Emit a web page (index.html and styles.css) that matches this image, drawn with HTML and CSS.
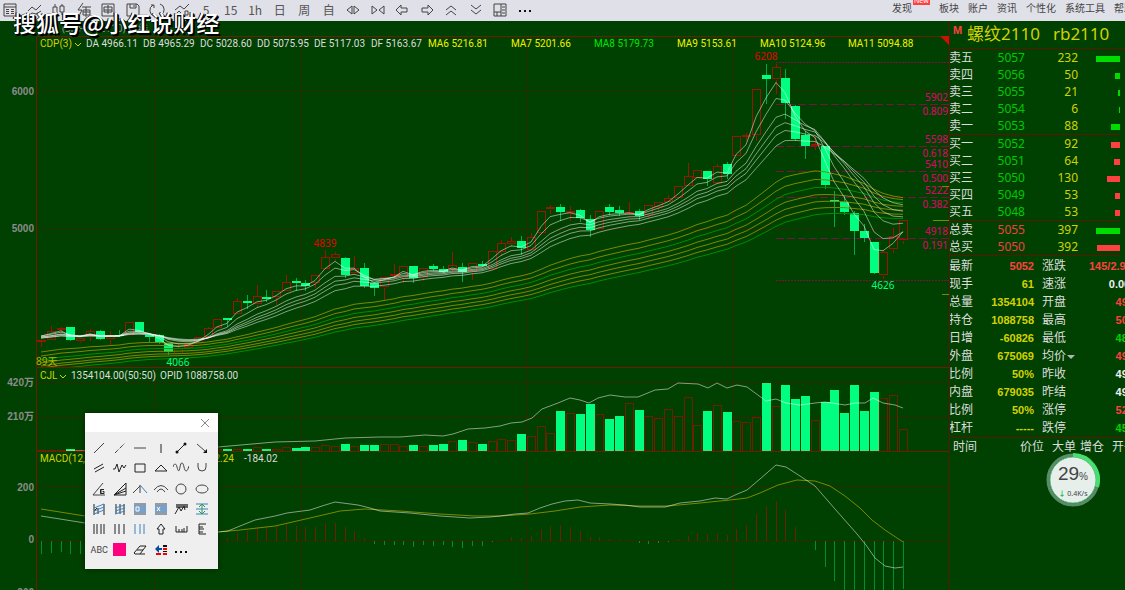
FILE: index.html
```html
<!DOCTYPE html>
<html lang="zh-CN">
<head>
    <meta charset="UTF-8">
    <meta name="viewport" content="width=device-width, initial-scale=1.0">
    <title>螺纹2110 rb2110</title>
    <link rel="stylesheet" href="styles.css">
</head>
<body>
    <header class="toolbar">
        <div class="tools">
            <button aria-label="报价"><svg viewBox="0 0 16 16"><path d="M2 2h12v12H2zM2 5h12M4 7.500h3M9 7.500h3M4 9.500h3M9 9.500h3M4 11.500h3M9 11.500h3"/></svg></button>
            <button aria-label="分时"><svg viewBox="0 0 16 16"><path d="M1 9l4-4 4 3 5-5M1 14l4-3 4 1 5-3"/></svg></button>
            <button aria-label="K线"><svg viewBox="0 0 16 16"><path d="M2 5h4v7H2zM4 2v3M4 12v3M9 4h4v6H9zM11 2v2M11 10v3"/></svg></button>
            <button aria-label="闪电下单"><svg viewBox="0 0 16 16"><path d="M7 1L2 8h4l-3 6M6 5h9M7 8h7v5H7zM10 5v10M7 10h7"/></svg></button>
            <button aria-label="画线下单"><svg viewBox="0 0 16 16"><path d="M2 2h12v12H2zM4 5h8v5H4zM8 3v9M4 8h8"/></svg></button>
            <button aria-label="保存"><svg viewBox="0 0 16 16"><path d="M2 2h10l2 2v10H2zM5 2v4h6V2M9 3v2"/></svg></button>
            <button aria-label="刷新"><svg viewBox="0 0 16 16"><path d="M5 14A6 6 0 0 1 4 3M2 3h3v3M11 2a6 6 0 0 1 1 11M14 13h-3v-3"/></svg></button>
            <button aria-label="指标"><svg viewBox="0 0 16 16"><path d="M1 8l5-4 4 3 5-5M1 13l4-4 4 4M11 9h3v4h-3z"/></svg></button>
            <button>5</button>
            <button>15</button>
            <button>1h</button>
            <button>日</button>
            <button>周</button>
            <button>自</button>
            <button aria-label="放大"><svg viewBox="0 0 16 16"><path d="M7 4v8L2 8zM9 4v8l5-4z"/></svg></button>
            <button aria-label="缩小"><svg viewBox="0 0 16 16"><path d="M2 4v8l5-4zM14 4v8L9 8z"/></svg></button>
            <button aria-label="左移"><svg viewBox="0 0 16 16"><path d="M2 8l5-5v3h6v4H7v3z"/></svg></button>
            <button aria-label="右移"><svg viewBox="0 0 16 16"><path d="M14 8L9 3v3H3v4h6v3z"/></svg></button>
            <button aria-label="上翻"><svg viewBox="0 0 16 16"><path d="M3 8l5-4 5 4M3 13l5-4 5 4"/></svg></button>
            <button aria-label="下翻"><svg viewBox="0 0 16 16"><path d="M3 3l5 4 5-4M3 8l5 4 5-4"/></svg></button>
            <button aria-label="布局"><svg viewBox="0 0 16 16"><path d="M2 2h12v12H2zM9 2v12M2 10h7M10 5h3M10 8h3M10 11h3M5 10v4"/></svg></button>
            <button aria-label="更多"><svg viewBox="0 0 16 16"><path class="solid" d="M2 8h2v2H2zM7 8h2v2H7zM12 8h2v2h-2z"/></svg></button>
        </div>
        <nav class="menu">
            <a href="#" class="find">发现<span class="new">New</span></a>
            <a href="#">板块</a>
            <a href="#">账户</a>
            <a href="#">资讯</a>
            <a href="#">个性化</a>
            <a href="#">系统工具</a>
            <a href="#">帮助</a>
        </nav>
    </header>
    <div class="watermark">搜狐号@小红说财经</div>

    <main class="main">
        <section class="charts" id="charts">
            <div class="title">(SHFE Z 2110) 日线</div>
            <div class="panel price">
                <svg id="price"></svg>
                <div class="legend">
                    <span class="name">CDP(3)<svg class="caret" viewBox="0 0 8 8"><path d="M1 3l3 3 3-3"/></svg></span>
                    <span class="d">DA 4966.11</span>
                    <span class="d">DB 4965.29</span>
                    <span class="d">DC 5028.60</span>
                    <span class="d">DD 5075.95</span>
                    <span class="d">DE 5117.03</span>
                    <span class="d">DF 5163.67</span>
                    <span class="ma">MA6 5216.81</span>
                    <span class="ma">MA7 5201.66</span>
                    <span class="ma lime">MA8 5179.73</span>
                    <span class="ma">MA9 5153.61</span>
                    <span class="ma wide">MA10 5124.96</span>
                    <span class="ma">MA11 5094.88</span>
                </div>
            </div>
            <div class="panel volume">
                <svg id="volume"></svg>
                <div class="legend">
                    <span class="cjl">CJL<svg class="caret" viewBox="0 0 8 8"><path d="M1 3l3 3 3-3"/></svg></span>
                    <span class="vol">1354104.00(50:50)</span>
                    <span>OPID 1088758.00</span>
                </div>
            </div>
            <div class="panel macd">
                <svg id="macd"></svg>
                <div class="legend">
                    <span class="macd-name"><span>MACD(12,26,9)</span><span>DEA -12.24</span></span>
                    <span>-184.02</span>
                </div>
            </div>

            <div class="palette">
                <div class="palette-head"><button aria-label="关闭"><svg viewBox="0 0 16 16"><path d="M4 4l8 8M12 4l-8 8"/></svg></button></div>
                <div class="palette-grid">
                    <button aria-label="线段"><svg viewBox="0 0 16 16"><path d="M3 13L13 3"/></svg></button>
                    <button aria-label="虚线"><svg viewBox="0 0 16 16"><path d="M3 13L13 3" stroke-dasharray="4 1 1 1"/></svg></button>
                    <button aria-label="水平线"><svg viewBox="0 0 16 16"><path d="M2 8h12"/></svg></button>
                    <button aria-label="垂直线"><svg viewBox="0 0 16 16"><path class="dark" d="M8 4v9"/></svg></button>
                    <button aria-label="双点线"><svg viewBox="0 0 16 16"><path class="dark" d="M4 12l8-8"/><circle class="solid" cx="4" cy="12" r="1.500"/><circle class="solid" cx="12" cy="4" r="1.500"/></svg></button>
                    <button aria-label="箭头"><svg viewBox="0 0 16 16"><path d="M3 4l8 7"/><path class="solid" d="M13 13H9l4-4z"/></svg></button>

                    <button aria-label="平行线"><svg viewBox="0 0 16 16"><path class="dark" d="M3 9l9-5M4 12l9-5"/></svg></button>
                    <button aria-label="折线"><svg viewBox="0 0 16 16"><path class="dark" d="M1 9h2l2-5 2 8 3-7 2 3 2-3"/></svg></button>
                    <button aria-label="矩形"><svg viewBox="0 0 16 16"><path class="dark" d="M3 4h10v8H3z"/></svg></button>
                    <button aria-label="三角形"><svg viewBox="0 0 16 16"><path class="dark" d="M8 5l6 6H2z"/></svg></button>
                    <button aria-label="波浪线"><svg viewBox="0 0 16 16"><path d="M0 7c1-4 3-4 4 0s2 6 3 0 3-5 4 0 3 6 5-1"/></svg></button>
                    <button aria-label="弧线"><svg viewBox="0 0 16 16"><path d="M4 3v4a4 4 0 0 0 8 0V3"/></svg></button>

                    <button aria-label="江恩角度"><svg viewBox="0 0 16 16"><path d="M12 2L2 14h12"/><path class="dark" d="M13 8.500h-3.500v4H13V10.500h-1.500M10 8.500v4"/></svg></button>
                    <button aria-label="速阻线"><svg viewBox="0 0 16 16"><path class="dark" d="M14 2L2 14h12zM2 14l12-4M2 14l12-7"/></svg></button>
                    <button aria-label="分叉线"><svg viewBox="0 0 16 16"><path d="M1 12l7-7M8 12V4"/><path class="blue" d="M8 4l7 8"/></svg></button>
                    <button aria-label="圆弧"><svg viewBox="0 0 16 16"><path d="M1 9q7-9 14 0M4 11q4-6 8 0"/></svg></button>
                    <button aria-label="圆"><svg viewBox="0 0 16 16"><circle cx="8" cy="8" r="5"/></svg></button>
                    <button aria-label="椭圆"><svg viewBox="0 0 16 16"><ellipse cx="8" cy="8" rx="6" ry="4"/></svg></button>

                    <button aria-label="通道一"><svg viewBox="0 0 16 16"><path class="dark" d="M3 3v11M13 3v11M7 7v6M3 10l3-3"/><path class="blue" d="M3 7l10-4M3 10l10-4M3 13l10-4"/></svg></button>
                    <button aria-label="通道二"><svg viewBox="0 0 16 16"><path class="dark" d="M4 3v10M8 3v10M12 3v11"/><path class="blue" d="M3 7l10-3M3 10l10-3M3 13l10-3"/></svg></button>
                    <button aria-label="区间一"><svg viewBox="0 0 16 16"><path class="fill" d="M2 4h12v8H2z"/><path d="M2 3h12M2 13h12"/><path class="light" d="M4 6h3v4H4z"/></svg></button>
                    <button aria-label="区间二"><svg viewBox="0 0 16 16"><path class="fill" d="M2 4h12v8H2z"/><path d="M2 3h12M2 13h12"/><path class="light" d="M4 6l3 4M7 6l-3 4"/></svg></button>
                    <button aria-label="形态"><svg viewBox="0 0 16 16"><path class="gray" d="M3 3h12v4H3z"/><path class="dark" d="M2 13l4-7 2 4 3-5 1 4"/></svg></button>
                    <button aria-label="测距"><svg viewBox="0 0 16 16"><path class="blue" d="M2 3h12M2 8h12M2 13h12"/><path class="green" d="M8 3v10M5 6l3-3 3 3M5 10l3 3 3-3"/></svg></button>

                    <button aria-label="四线"><svg viewBox="0 0 16 16"><path class="dark" d="M3 3v10M6 3v10M10 3v10M13 3v10"/></svg></button>
                    <button aria-label="三线"><svg viewBox="0 0 16 16"><path class="dark" d="M3 3v10M7 3v10M12 3v10"/></svg></button>
                    <button aria-label="蓝线"><svg viewBox="0 0 16 16"><path class="blue" d="M3 3v10M8 3v10M12 3v10"/></svg></button>
                    <button aria-label="上箭头"><svg viewBox="0 0 16 16"><path class="dark" d="M8 3l4 5h-2v5H6V8H4z"/></svg></button>
                    <button aria-label="横标尺"><svg viewBox="0 0 16 16"><path class="dark" d="M3 5v6h11V5M6 8v3M9 8v3M11 7v4"/></svg></button>
                    <button aria-label="竖标尺"><svg viewBox="0 0 16 16"><path class="dark" d="M12 3H5v10h7M5 6h4M5 8h5M5 11h4"/></svg></button>

                    <button class="abc">ABC</button>
                    <button aria-label="颜色"><svg viewBox="0 0 16 16"><path class="pink" d="M1 1h13v13H1z"/></svg></button>
                    <button aria-label="橡皮"><svg viewBox="0 0 16 16"><path class="dark" d="M2 11l6-7h6l-6 8H3zM5 8h6M8 12h5"/></svg></button>
                    <button aria-label="设置"><svg viewBox="0 0 16 16"><path class="navy" d="M2 7l4-4v3h3v2H6v3z"/><path class="red" d="M3 11h5v2H3zM10 6h4v2h-4zM10 11h4v2h-4z"/><path class="solid" d="M10 3h4v2h-4zM10 9h4v1h-4z"/></svg></button>
                    <button aria-label="更多画线"><svg viewBox="0 0 16 16"><path class="solid" d="M2 9h2v2H2zM7 9h2v2H7zM12 9h2v2h-2z"/></svg></button>
                </div>
            </div>
        </section>

        <aside class="side">
            <div class="side-inner">
                <h1><span class="m">M</span><span>螺纹2110</span><span>rb2110</span></h1>
                <table class="book sell">
                    <tr><th>卖五</th><td>5057</td><td>232</td><td><i style="width:24px"></i></td></tr>
                    <tr><th>卖四</th><td>5056</td><td>50</td><td><i style="width:5px"></i></td></tr>
                    <tr><th>卖三</th><td>5055</td><td>21</td><td><i style="width:2px"></i></td></tr>
                    <tr><th>卖二</th><td>5054</td><td>6</td><td><i style="width:1px"></i></td></tr>
                    <tr><th>卖一</th><td>5053</td><td>88</td><td><i style="width:9px"></i></td></tr>
                </table>
                <table class="book buy">
                    <tr><th>买一</th><td>5052</td><td>92</td><td><i style="width:9px"></i></td></tr>
                    <tr><th>买二</th><td>5051</td><td>64</td><td><i style="width:6px"></i></td></tr>
                    <tr><th>买三</th><td>5050</td><td>130</td><td><i style="width:13px"></i></td></tr>
                    <tr><th>买四</th><td>5049</td><td>53</td><td><i style="width:5px"></i></td></tr>
                    <tr><th>买五</th><td>5048</td><td>53</td><td><i style="width:5px"></i></td></tr>
                </table>
                <table class="book total">
                    <tr class="up"><th>总卖</th><td>5055</td><td>397</td><td><i style="width:24px"></i></td></tr>
                    <tr><th>总买</th><td>5050</td><td>392</td><td><i style="width:23px"></i></td></tr>
                </table>
                <table class="stats">
                    <tr><th>最新</th><td class="r">5052</td><th>涨跌</th><td class="r">145/2.95%</td></tr>
                    <tr><th>现手</th><td>61</td><th>速涨</th><td class="w">0.00%</td></tr>
                    <tr><th>总量</th><td>1354104</td><th>开盘</th><td class="r">4926</td></tr>
                    <tr><th>持仓</th><td>1088758</td><th>最高</th><td class="r">5060</td></tr>
                    <tr><th>日增</th><td>-60826</td><th>最低</th><td class="g">4888</td></tr>
                    <tr><th>外盘</th><td>675069</td><th>均价<b class="drop"></b></th><td class="r">4980</td></tr>
                    <tr><th>比例</th><td>50%</td><th>昨收</th><td class="w">4928</td></tr>
                    <tr><th>内盘</th><td>679035</td><th>昨结</th><td class="w">4907</td></tr>
                    <tr><th>比例</th><td>50%</td><th>涨停</th><td class="r">5299</td></tr>
                    <tr><th>杠杆</th><td>-----</td><th>跌停</th><td class="g">4514</td></tr>
                </table>
                <div class="ticks"><span>时间</span><span>价位</span><span>大单</span><span>增仓</span><span>开平</span></div>
            </div>
        </aside>

        <div class="gauge">
            <svg viewBox="0 0 54 54">
                <circle class="ring" cx="27" cy="27" r="25"/>
                <path class="arc" d="M27 2A25 25 0 0 1 51 34"/>
                <circle class="face" cx="27" cy="27" r="23"/>
            </svg>
            <div class="pct">29<small>%</small></div>
            <div class="net"><em>↓</em> 0.4K/s</div>
        </div>
    </main>
    <script src="chart.js"></script>
</body>
</html>
```
FILE: styles.css
```css
body {
    margin: 0;
    min-height: 590px;
    overflow-x: hidden;
    background-color: #004000;
    color: #dcdcdc;
    font-family: "Noto Sans", "Noto Sans CJK SC", sans-serif;
    font-size: 10px;
}
button {
    padding: 0;
    border: 0;
    background: none;
    font: inherit;
    color: inherit;
}
/* toolbar */
.toolbar {
    display: flex;
    justify-content: space-between;
    height: 21px;
    background-color: #e0e0e8;
    color: #555;
    overflow: hidden;
}
.tools {
    display: flex;
    flex: none;
    justify-content: space-between;
    width: 531px;
    padding-left: 2px;
}
.tools button {
    width: 16px;
    height: 19px;
    font-family: "Noto Sans CJK SC", sans-serif;
    font-size: 12px;
    line-height: 19px;
    white-space: nowrap;
    display: flex;
    justify-content: center;
    align-items: center;
}
.tools svg {
    width: 16px;
    height: 16px;
}
svg path, svg circle, svg ellipse {
    fill: none;
    stroke: #444;
}
svg .solid {
    fill: #111;
    stroke: none;
}
.menu {
    display: flex;
    flex: none;
    gap: 9px;
    margin-right: -9px;
    line-height: 17px;
    white-space: nowrap;
}
.menu a {
    color: #444;
    text-decoration: none;
}
.find {
    position: relative;
    margin-right: 18px;
}
.new {
    position: absolute;
    left: 21px;
    top: -4px;
    padding: 0 1px;
    background-color: #ff4040;
    color: #fff;
    font-size: 7px;
    line-height: 9px;
}
.watermark {
    position: absolute;
    left: 13px;
    top: 6px;
    z-index: 5;
    color: #fff;
    font-family: "Noto Sans CJK SC", sans-serif;
    font-size: 23px;
    font-weight: 500;
    line-height: 32px;
    text-shadow: 1px 1px 0 #000, 2px 2px 0 #000, -1px 0 0 #000;
}
/* layout */
.main {
    position: relative;
    display: grid;
    grid-template-columns: minmax(0, 1fr) 176px;
}
.charts {
    position: relative;
}
.title {
    height: 15px;
    padding-left: 62px;
    color: #8a9a8a;
    line-height: 15px;
}
.panel {
    position: relative;
    overflow: hidden;
}
.price {
    height: 331px;
}
.volume {
    height: 84px;
}
.macd {
    height: 139px;
}
.panel > svg {
    display: block;
    width: 100%;
    height: 100%;
}
.legend {
    position: absolute;
    left: 40px;
    top: 0;
    display: flex;
    font-family: Roboto, sans-serif;
    line-height: 15px;
    white-space: nowrap;
}
.volume .legend {
    top: 1px;
}
.name, .cjl, .macd-name, .ma {
    color: #d2d200;
}
.name {
    width: 46px;
}
.d {
    width: 57px;
}
.ma {
    width: 83px;
    color: #f0f000;
}
.wide {
    width: 88px;
}
.lime {
    color: #00e600;
}
.cjl {
    width: 31px;
}
.vol {
    width: 89px;
}
.macd-name {
    display: flex;
    justify-content: space-between;
    width: 194px;
    margin-right: 10px;
}
.caret {
    width: 8px;
    height: 8px;
    margin-left: 2px;
    vertical-align: middle;
}
.caret path {
    stroke: #d2d200;
}
/* chart drawing */
.panel svg .grid {
    stroke: #282c00;
    stroke-width: 1;
}
.panel svg .axis {
    stroke: #701c00;
    stroke-width: 1;
}
.panel svg .up {
    fill: none;
    stroke: #961800;
}
.panel svg .down {
    fill: #00ff80;
    stroke: none;
}
.panel svg .wick-up {
    stroke: #961800;
}
.panel svg .wick-down {
    stroke: #00a850;
}
.panel svg .bar-up {
    stroke: #6c2000;
}
.panel svg .bar-down {
    stroke: #008c38;
}
.panel svg .white {
    stroke: #fff;
    stroke-opacity: 0.500;
}
.panel svg .yellow {
    stroke: #7c8800;
}
.panel svg .green {
    stroke: #008c00;
}
.panel svg .fib {
    stroke: #7c1040;
}
.panel svg .corner {
    fill: #c81400;
    stroke: none;
}
.scale {
    fill: #8c8c8c;
    font-family: "Liberation Sans", "Noto Sans CJK SC", sans-serif;
    font-weight: bold;
}
.pinktext {
    fill: #e00070;
}
.redtext {
    fill: #e60000;
}
.greentext {
    fill: #00ff80;
}
.yellowtext {
    fill: #b4b400;
}
/* drawing palette */
.palette {
    position: absolute;
    left: 85px;
    top: 392px;
    width: 133px;
    background-color: #efefef;
    color: #444;
    box-shadow: 0 0 4px #002000;
}
.palette-head {
    height: 19px;
    background-color: #fff;
    text-align: right;
}
.palette-head button {
    height: 19px;
    margin-right: 5px;
}
.palette-head path {
    stroke: #888;
}
.palette svg {
    display: block;
    width: 16px;
    height: 16px;
}
.palette-grid {
    display: grid;
    grid-template-columns: repeat(6, 1fr);
    grid-template-rows: repeat(6, 1fr);
    height: 122px;
    padding: 6px 6px 9px 4px;
}
.palette-grid button {
    display: flex;
    justify-content: center;
    align-items: center;
}
.palette .abc {
    font-family: Roboto, sans-serif;
    font-size: 9px;
}
.palette .dark {
    stroke: #222;
}
.palette .blue {
    stroke: #3c82be;
}
.palette .green {
    stroke: #2c9a4c;
}
.palette .fill {
    fill: #78a0c8;
    stroke: none;
}
.palette .gray {
    fill: #666;
    stroke: none;
}
.palette .light {
    stroke: #fff;
}
.palette .pink {
    fill: #ff0080;
    stroke: none;
}
.palette .navy {
    fill: #0050a0;
    stroke: none;
}
.palette .red {
    fill: #f00000;
    stroke: none;
}
/* quote side */
.side {
    overflow: hidden;
    box-sizing: border-box;
    border-left: 1px solid #5a1800;
}
.side-inner {
    width: 193px;
    margin-left: -1px;
}
h1 {
    display: flex;
    height: 27px;
    margin: 0;
    border-bottom: 1px solid #5a1800;
    color: #d2d200;
    font-size: 17px;
    font-weight: normal;
    line-height: 26px;
}
h1 span {
    margin-right: 13px;
}
h1 .m {
    width: 14px;
    margin: 0 0 0 4px;
    color: #ff4040;
    font-family: "Liberation Sans", sans-serif;
    font-size: 11px;
    font-weight: bold;
    line-height: 18px;
}
table {
    border-collapse: collapse;
    table-layout: fixed;
    font-size: 12px;
}
th {
    padding: 0;
    font-weight: normal;
    text-align: left;
    white-space: nowrap;
}
td {
    padding: 0;
    text-align: right;
    white-space: nowrap;
}
.book {
    width: 171px;
}
.book.buy {
    border-top: 1px solid #5a1800;
    border-bottom: 1px solid #5a1800;
}
.book.total {
    border-bottom: 1px solid #5a1800;
}
.book tr {
    height: 17px;
    line-height: 17px;
}
.book th {
    width: 36px;
}
.book td:nth-child(2) {
    width: 40px;
    color: #00c800;
}
.book td:nth-child(3) {
    width: 53px;
    color: #d2d200;
}
.book i {
    display: inline-block;
    height: 6px;
    background-color: #ff4040;
}
.sell i, .up i {
    background-color: #00dc00;
}
.book.total td:nth-child(2) {
    color: #f04040;
}
.stats {
    width: 191px;
    margin-top: 1px;
}
.stats tr {
    height: 18px;
    line-height: 18px;
}
.stats th:first-child {
    width: 36px;
}
.stats th:nth-child(3) {
    width: 47px;
    padding-left: 8px;
}
.stats td {
    color: #d2d200;
    font-family: "Liberation Sans", sans-serif;
    font-size: 11px;
    font-weight: bold;
}
.stats td:nth-child(2) {
    width: 49px;
}
.stats td:nth-child(4) {
    width: 51px;
}
.stats .r {
    color: #ff4040;
}
.stats .g {
    color: #00d200;
}
.stats .w {
    color: #f0f0f0;
}
.drop {
    display: inline-block;
    margin-left: 1px;
    border: 4px solid transparent;
    border-top-color: #b4b4b4;
    border-bottom: 0;
    vertical-align: middle;
}
.ticks {
    display: flex;
    gap: 4px;
    border-top: 1px solid #5a1800;
    padding-left: 4px;
    font-size: 12px;
    line-height: 18px;
}
.ticks span:first-child {
    margin-right: 39px;
}
.ticks span:nth-child(2), .ticks span:nth-child(4) {
    margin-right: 4px;
}
/* speed ball */
.gauge {
    position: absolute;
    right: 25px;
    top: 432px;
    width: 54px;
    height: 54px;
    color: #444;
    text-align: center;
}
.gauge svg {
    position: absolute;
    left: 0;
    top: 0;
    width: 54px;
    height: 54px;
}
.gauge .ring {
    stroke: #5a8c6a;
    stroke-width: 3;
}
.gauge .arc {
    stroke: #46e06e;
    stroke-width: 4;
}
.gauge .face {
    fill: #e6efea;
    stroke: #64c88c;
}
.pct {
    position: relative;
    margin-top: 10px;
    font-family: "Liberation Sans", sans-serif;
    font-size: 19px;
    line-height: 22px;
}
.pct small {
    font-size: 10px;
}
.net {
    position: relative;
    font-size: 7px;
    line-height: 12px;
}
.net em {
    color: #14b450;
    font-style: normal;
    font-weight: bold;
}
```
FILE: chart.js
```js
// u = up (red), d = down (green): high, body top, body bottom, low
const candles = [
    ["u",340,340,341,346], ["u",325,331,340,340], ["u",326,328,329,332], ["d",327,327,340,340],
    ["u",338,338,341,342], ["u",328,331,336,340], ["d",329,331,339,339], ["u",330,336,339,344],
    ["d",329,335,336,336], ["u",322,322,335,335], ["d",322,322,332,332], ["d",335,335,337,341],
    ["d",333,335,343,343], ["d",343,343,352,354], ["u",342,348,354,355], ["u",343,344,348,348],
    ["u",337,337,343,343], ["u",326,328,337,337], ["u",319,319,328,328], ["d",318,318,320,326],
    ["u",297,301,314,314], ["d",294,301,303,308], ["u",284,296,304,307], ["d",289,297,299,301],
    ["u",291,291,297,304], ["u",274,282,291,291], ["d",277,281,283,290], ["d",279,283,286,290],
    ["u",275,275,283,287], ["u",249,257,269,269], ["u",251,254,258,260], ["d",256,258,275,277],
    ["u",255,268,273,273], ["d",262,268,286,287], ["d",283,283,288,295], ["u",277,277,287,300],
    ["u",263,274,275,278], ["u",266,266,277,282], ["d",266,266,278,282], ["u",268,268,277,280],
    ["d",263,266,269,270], ["d",265,269,272,272], ["u",251,265,269,273], ["d",262,267,272,281],
    ["u",263,263,272,279], ["d",260,264,266,266], ["u",251,251,269,269], ["u",239,243,252,255],
    ["u",236,241,244,246], ["d",235,241,248,254], ["u",232,237,250,250], ["u",211,211,233,233],
    ["u",204,207,209,213], ["d",203,207,212,220], ["u",205,211,213,220], ["d",208,210,218,221],
    ["d",214,219,230,236], ["u",211,211,229,229], ["d",203,207,212,214], ["d",205,210,213,215],
    ["u",201,212,213,214], ["d",208,211,216,219], ["u",205,205,215,217], ["u",202,202,207,210],
    ["u",194,198,202,202], ["u",186,186,198,198], ["u",162,176,186,186], ["u",169,170,178,178],
    ["d",170,171,179,185], ["u",163,166,183,183], ["d",161,164,174,178], ["u",136,136,156,157],
    ["u",132,135,136,140], ["u",89,89,135,140], ["d",63,75,79,103], ["u",63,67,79,93],
    ["d",68,78,103,118], ["d",104,106,139,140], ["d",130,135,146,158], ["u",135,144,146,149],
    ["d",146,146,185,188], ["d",190,200,202,226], ["d",195,202,212,214], ["d",210,213,231,254],
    ["d",223,231,238,241], ["d",242,242,273,273], ["u",249,252,275,278], ["u",227,236,249,252],
    ["u",220,220,240,243]
];

const volumes = [
    1,1,1,2,1,1,1,1,1,2,2,1,2,2,2,1,1,1,2,2,2,2,4,2,2,4,3,4,4,6,5,7,5,6,6,7,7,5,6,5,6,7,10,
    11,9,7,10,12,11,17,15,25,18,40,38,37,47,37,32,35,48,41,35,33,42,35,54,26,40,46,39,30,29,34,
    68,45,66,52,55,31,49,61,38,66,40,59,53,56,22
];

const hist = [
    -13,-12,-11,-13,-13,-13,-14,-14,-13,-12,-11,-9,-9,-10,-9,-7,-4,-2,1,3,8,10,14,15,15,17,15,
    14,14,18,18,14,10,3,-3,-4,-4,-4,-6,-4,-5,-4,-6,-7,-5,-5,-1,1,4,3,5,12,15,16,14,10,4,4,2,1,
    1,-2,-3,-2,-1,2,5,8,7,8,6,12,16,27,35,40,31,14,1,-9,-26,-40,-58,-66,-72,-76,-70,-60,-48
];

const openInterest = "66,451 160,450 218,447 275,442 315,441 345,438 380,437 400,437 425,435 443,436 453,434 468,429 485,428 500,426 511,423 522,422 532,418 542,409 558,403 570,398 580,400 589,403 598,398 610,395 625,397 638,397 655,390 668,389 678,383 698,384 708,388 717,383 727,388 737,385 747,387 766,401 776,399 786,403 800,405 815,403 825,402 845,405 855,403 865,403 873,398 883,403 895,405 903,408";
const diff = "41,516 60,519 85,523 110,530 160,540 200,535 218,532 228,531 240,526 255,520 275,516 287,513 310,510 322,506 335,502 358,505 370,508 380,511 410,513 440,516 470,518 490,517 500,516 515,514 528,513 540,508 552,504 565,501 578,500 590,503 610,504 625,505 640,507 665,507 680,503 700,501 715,498 727,499 735,495 747,490 760,479 776,465 786,467 800,476 815,486 835,509 857,534 866,545 875,558 885,566 895,568 903,567";
const dea = "41,509 85,516 150,526 218,532 240,530 275,526 310,518 340,511 365,509 400,511 440,514 475,516 500,516 530,514 555,511 580,507 610,505 640,506 668,506 700,503 730,500 747,498 760,493 778,485 797,480 815,481 830,486 845,496 860,508 872,520 885,530 903,542";

const fibs = [
    [62, "", ""], [104, "5902", "0.809"], [146, "5598", "0.618"], [171, "5410", "0.500"],
    [197, "5222", "0.382"], [238, "4918", "0.191"], [280, "", ""]
];

const FIRST = 41;
let width, step;

function posX(i) {
    return Math.round(FIRST + i * step);
}

function line(x1, y1, x2, y2, cls, extra = "") {
    return `<path class="${cls}" shape-rendering="crispEdges" ${extra} d="M${x1 + 0.5} ${y1 + 0.5}L${x2 + 0.5} ${y2 + 0.5}"/>`;
}

function text(x, y, str, cls, anchor = "start") {
    return str ? `<text x="${x}" y="${y}" class="${cls}" text-anchor="${anchor}">${str}</text>` : "";
}

function curve(points, cls) {
    return `<path class="${cls}" d="M${points.map(p => p.join(" ")).join("L")}"/>`;
}

// stored points are for 88 steps over 862px
function stored(str, cls) {
    const points = str.split(" ").map(p => {
        const [x, y] = p.split(",").map(Number);
        return [FIRST + (x - FIRST) * step * 88 / 862, y];
    });
    return curve(points, cls);
}

function ema(days, start, cls) {
    let value = start;
    const k = 2 / (days + 1);
    const points = candles.map((c, i) => {
        const close = c[0] === "u" ? c[2] : c[3];
        if (i > 0) value += (close - value) * k;
        return [posX(i), value.toFixed(1)];
    });
    return curve(points, cls);
}

function frame(top, bottom, rows) {
    let out = "";
    [11.5, 26.5, 49.5, 70.5].forEach(i => {
        out += line(posX(i), top, posX(i), bottom, "grid");
    });
    rows.forEach(y => out += line(37, y, width, y, "grid"));
    out += line(36, top, 36, bottom, "axis");
    out += line(36, top, width, top, "axis");
    return out;
}

function put(id, top, height, content) {
    const svg = document.getElementById(id);
    svg.setAttribute("viewBox", `0 ${top} ${width} ${height}`);
    svg.innerHTML = content;
}

function drawPrice() {
    let out = frame(36, 367, [91, 228]);
    out += text(34, 95, "6000", "scale", "end") + text(34, 232, "5000", "scale", "end");
    const left = posX(75);
    fibs.forEach(([y, price]) => {
        out += `<path class="fib" stroke-dasharray="${price ? "8 3" : "2 1"}" d="M${left} ${y + 0.5}H${width}"/>`;
    });
    candles.forEach(([dir, high, top, bottom, low], i) => {
        const x = posX(i);
        if (dir === "u") {
            out += line(x, high, x, top, "wick-up") + line(x, bottom, x, low, "wick-up");
            out += `<rect class="up" shape-rendering="crispEdges" x="${x - 3.5}" y="${top + 0.5}" width="8" height="${Math.max(bottom - top - 1, 1)}"/>`;
        } else {
            out += line(x, high, x, low, "wick-down");
            out += `<rect class="down" x="${x - 4}" y="${top}" width="9" height="${bottom - top}"/>`;
        }
    });
    [[30, 352, "yellow"], [35, 356, "yellow"], [40, 360, "green"], [45, 363, "yellow"],
     [50, 366, "yellow"], [55, 368, "yellow"], [60, 371, "green"]].forEach(m => out += ema(...m));
    [[3, 336], [5, 336], [8, 337], [10, 337], [12, 338], [15, 338]].forEach(m => out += ema(...m, "white"));

    fibs.forEach(([y, price, ratio]) => {
        out += text(width - 1, y - 3, price, "pinktext", "end") + text(width - 1, y + 11, ratio, "pinktext", "end");
    });
    out += text(posX(75) - 10, 60, "6208", "redtext", "middle");
    out += text(posX(29), 247, "4839", "redtext", "middle");
    out += text(posX(14), 366, "4066", "greentext", "middle");
    out += text(posX(86), 289, "4626", "greentext", "middle");
    out += text(36, 365, "89天", "yellowtext");
    out += line(width - 8, 186, width, 186, "yellow") + line(width - 17, 220, width, 220, "yellow") + line(width - 8, 294, width, 294, "yellow");
    out += `<path class="corner" d="M${width - 9} 36h9v9z"/>`;
    put("price", 36, 331, out);
}

function drawVolume() {
    let out = frame(367, 451, [382, 416]);
    out += text(34, 386, "420万", "scale", "end") + text(34, 420, "210万", "scale", "end");
    volumes.forEach((v, i) => {
        const x = posX(i);
        if (candles[i][0] === "u") {
            out += `<rect class="up bar-up" shape-rendering="crispEdges" x="${x - 3.5}" y="${451.5 - v}" width="8" height="${v}"/>`;
        } else {
            out += `<rect class="down" x="${x - 4}" y="${451 - v}" width="9" height="${v}"/>`;
        }
    });
    out += stored(openInterest, "white");
    put("volume", 367, 84, out);
}

function drawMacd() {
    let out = frame(451, 590, [487, 540]);
    out += text(34, 491, "200", "scale", "end") + text(34, 543, "0", "scale", "end") + text(34, 596, "-200", "scale", "end");
    hist.forEach((v, i) => {
        out += line(posX(i), 540, posX(i), 540 - v, v > 0 ? "bar-up" : "bar-down");
    });
    out += stored(dea, "yellow") + stored(diff, "white");
    put("macd", 451, 139, out);
}

function draw() {
    width = document.getElementById("charts").clientWidth;
    step = (width - 46 - FIRST) / 88;
    drawPrice();
    drawVolume();
    drawMacd();
}

window.addEventListener("resize", draw);
draw();
```
